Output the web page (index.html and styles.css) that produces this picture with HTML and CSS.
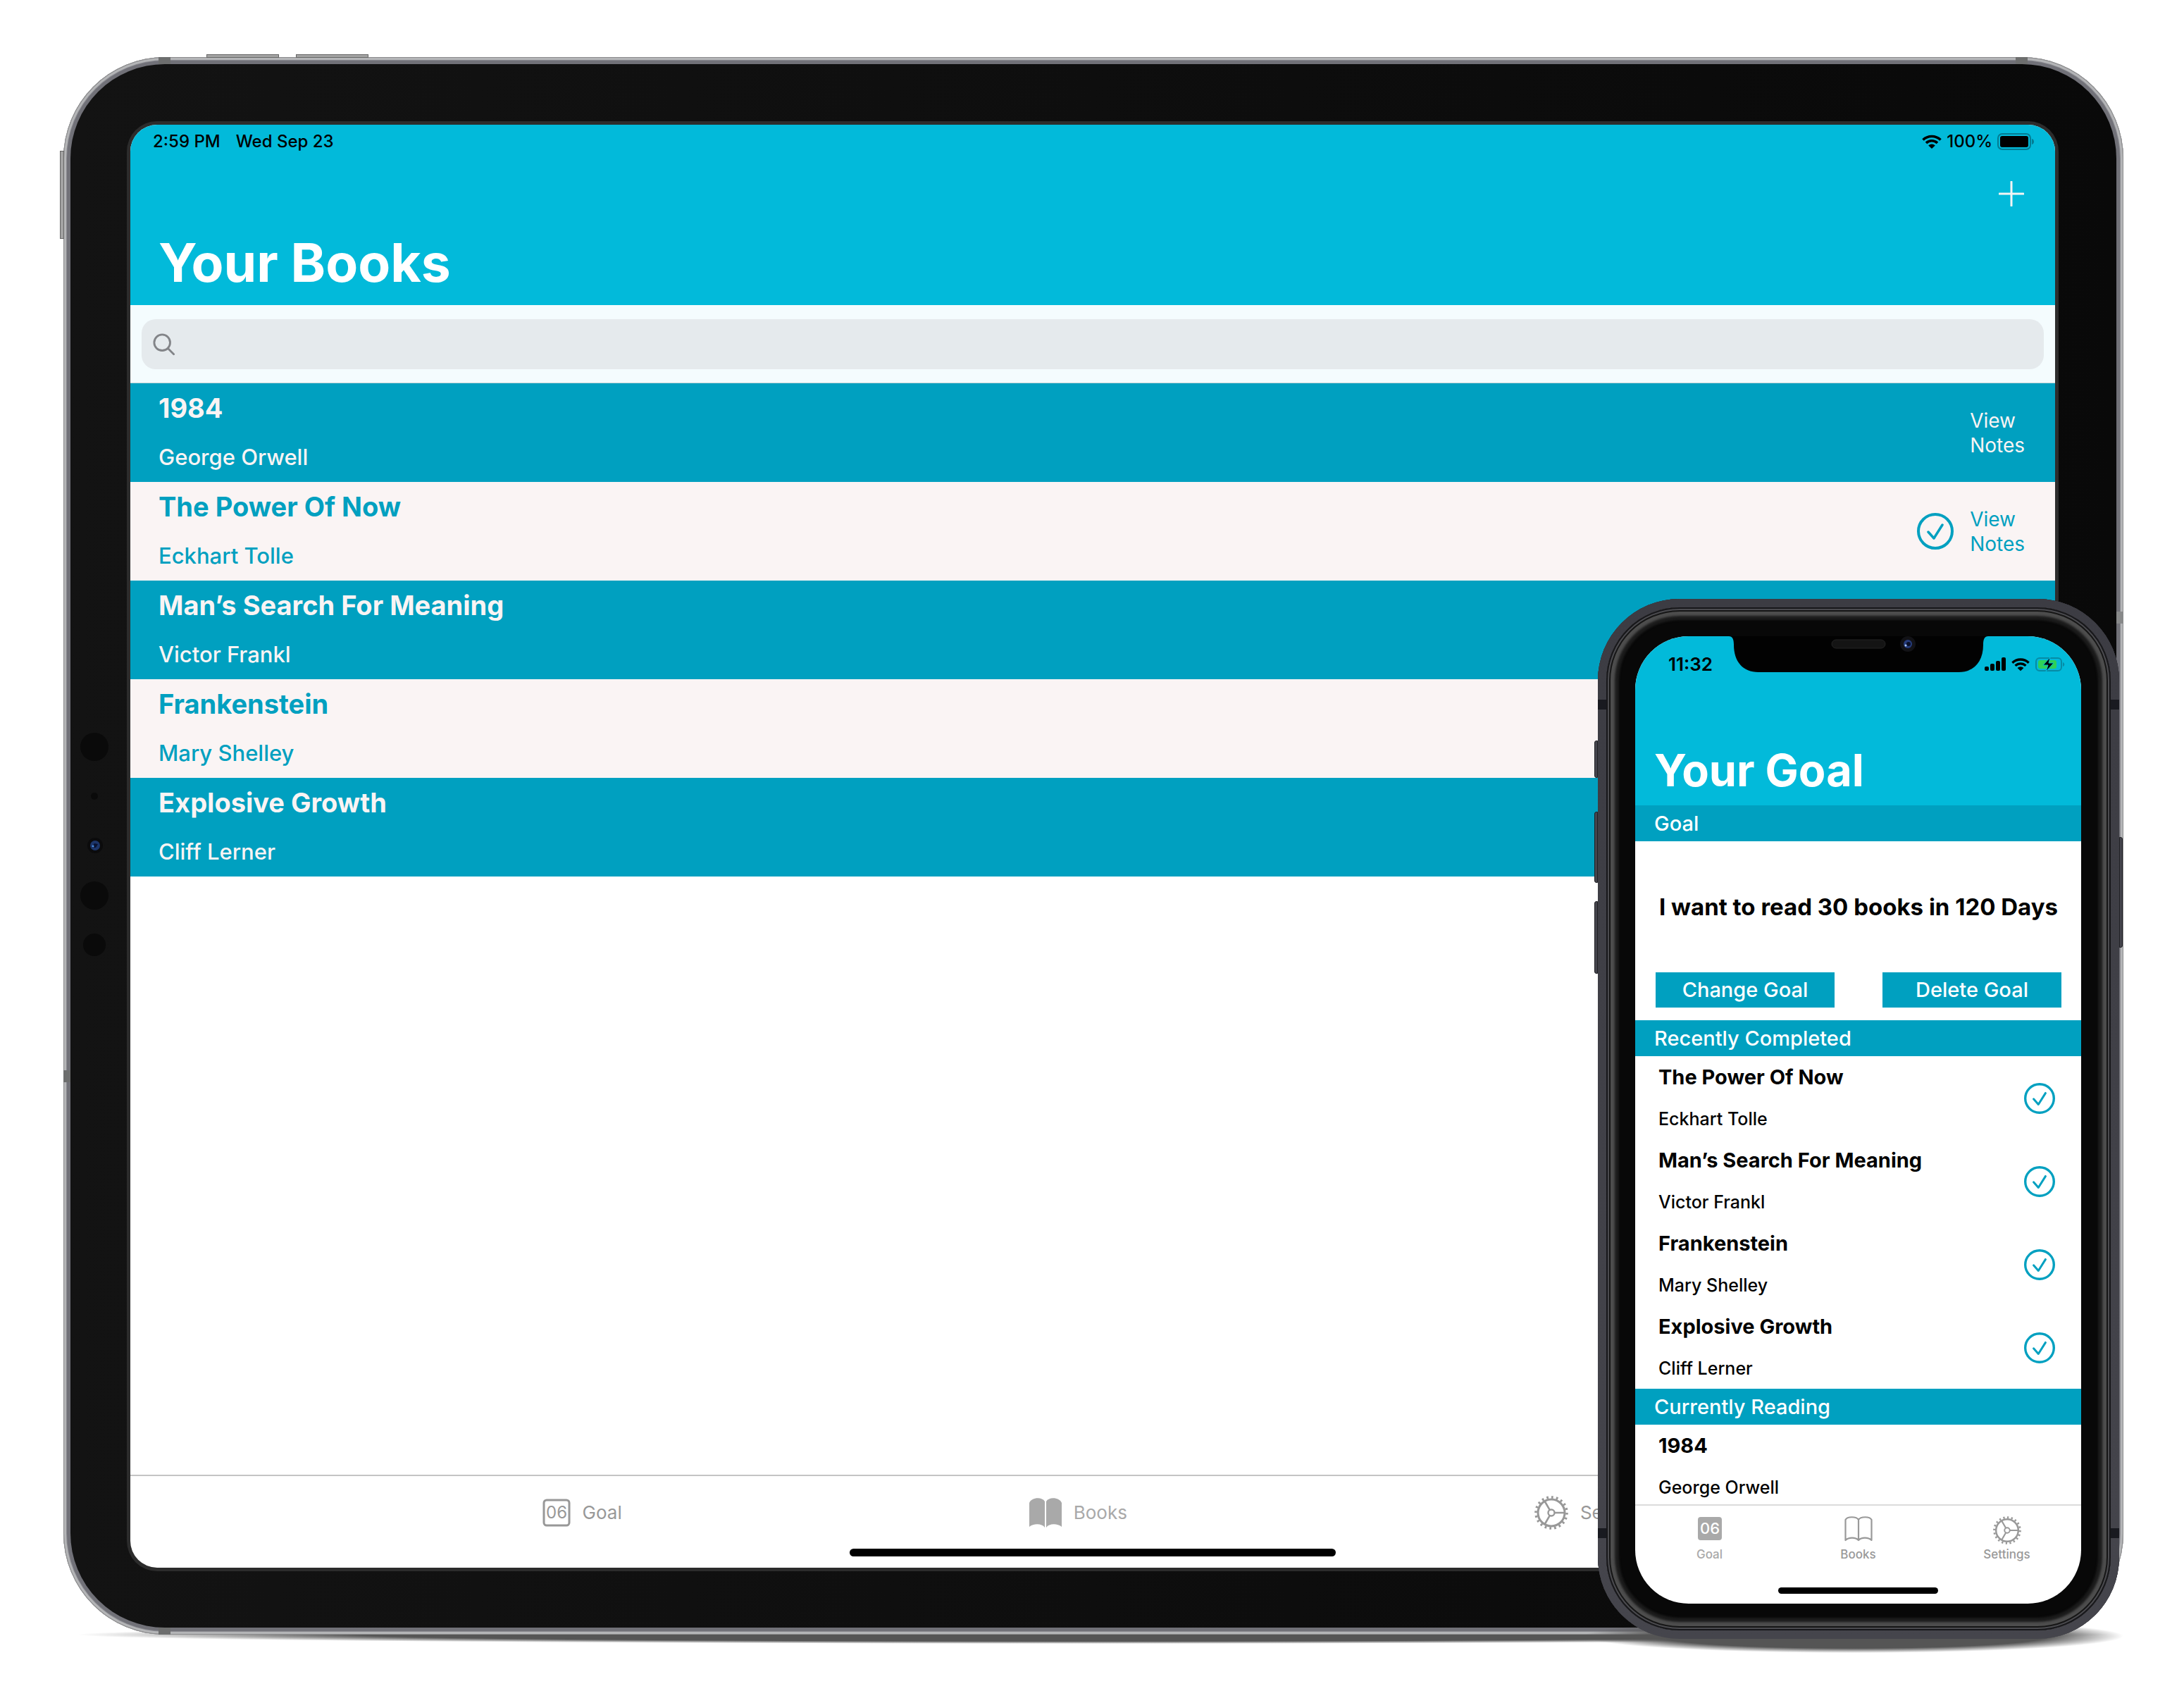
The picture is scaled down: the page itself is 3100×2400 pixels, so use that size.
FILE: index.html
```html
<!DOCTYPE html>
<html lang="en">
<head>
<meta charset="utf-8">
<meta name="viewport" content="width=device-width, initial-scale=1">
<title>Your Books</title>
<link rel="stylesheet" href="styles.css">
</head>
<body>
<svg class="sprite" aria-hidden="true">
  <symbol id="check" viewBox="0 0 52 52">
    <circle cx="26" cy="26" r="24" fill="none" stroke="currentColor" stroke-width="4"/>
    <path d="M16 27l8 9L36 17" fill="none" stroke="currentColor" stroke-width="3.500" stroke-linecap="round" stroke-linejoin="round"/>
  </symbol>
  <symbol id="wifi" viewBox="0 0 28 20">
    <path d="M1.500 7.500a18 18 0 0 1 25 0M6 12a11.500 11.500 0 0 1 16 0" fill="none" stroke="currentColor" stroke-width="3.600"/>
    <path d="M14 20l-4.800-4.600a7 7 0 0 1 9.600 0z" fill="currentColor"/>
  </symbol>
  <symbol id="gear" viewBox="0 0 48 48">
    <g fill="none" stroke="currentColor">
      <circle cx="24" cy="24" r="19" stroke-width="3"/>
      <circle cx="24" cy="24" r="22" stroke-width="3.600" pathLength="60" stroke-dasharray="1.200 1.800"/>
      <circle cx="24" cy="24" r="4.500" stroke-width="2.400"/>
      <path d="M28.500 24H43M21.800 20.100L14.500 7.500M21.800 27.900L14.500 40.500" stroke-width="2.600"/>
    </g>
  </symbol>
  <symbol id="book-solid" viewBox="0 0 46 42">
    <path d="M0 7C3-1 18-2 22 5V42C18 36 6 36 0 41zM46 7C43-1 28-2 24 5V42C28 36 40 36 46 41z" fill="currentColor"/>
  </symbol>
  <symbol id="book-line" viewBox="0 0 40 36">
    <path d="M1.500 5C4 0 17 0 20 5C23 0 36 0 38.500 5V34C34 29.500 24 29.500 20 34C16 29.500 6 29.500 1.500 34zM20 5V34" fill="none" stroke="currentColor" stroke-width="2.200" stroke-linejoin="round"/>
  </symbol>
</svg>

<main class="stage">
  <section class="tablet" aria-label="Your Books">
    <i class="tablet-key key-up"></i><i class="tablet-key key-down"></i><i class="tablet-key key-side"></i>
    <i class="band band-tl"></i><i class="band band-tr"></i><i class="band band-bl"></i><i class="band band-l"></i><i class="band band-r"></i>
    <div class="tablet-bezel">
      <svg class="sensors" viewBox="0 0 44 304" aria-hidden="true">
        <g fill="#0a0a0a"><circle cx="22" cy="21" r="20"/><circle cx="22" cy="91" r="5"/><circle cx="22" cy="232" r="20"/><circle cx="22" cy="302" r="16"/></g>
        <circle cx="23" cy="161" r="11" fill="#0b0b0c"/><circle cx="23" cy="161" r="7" fill="#1c3569"/><path d="M18 164l4-6 5 1-3 5z" fill="#0a1230"/><circle cx="20" cy="162" r="1.500" fill="#4a90e8"/>
      </svg>
      <div class="tablet-screen">
        <header class="tablet-header">
          <div class="tablet-status">
            <span>2:59 PM</span><span>Wed Sep 23</span>
            <span class="status-right">
              <svg width="28" height="20"><use href="#wifi"/></svg>
              <span>100%</span>
              <svg width="52" height="24" viewBox="0 0 52 24" aria-hidden="true"><rect x="1" y="1" width="46" height="22" rx="6" fill="none" stroke="#037c93" stroke-width="2"/><rect x="4" y="4" width="40" height="16" rx="3"/><path d="M49 8c4 1 4 7 0 8z" fill="#037c93"/></svg>
            </span>
          </div>
          <button class="add" aria-label="Add book"><svg width="36" height="36" viewBox="0 0 36 36"><path d="M18 1v34M1 18h34" stroke="#f4f4f4" stroke-width="3" stroke-linecap="round"/></svg></button>
          <h1 class="tablet-title">Your Books</h1>
        </header>
        <div class="search">
          <label class="search-field">
            <svg width="32" height="32" viewBox="0 0 34 34" aria-hidden="true"><circle cx="14" cy="14" r="12" fill="none" stroke="#828488" stroke-width="3"/><path d="M22.500 22.500l9 9" stroke="#828488" stroke-width="3" stroke-linecap="round"/></svg>
            <input type="search" aria-label="Search books">
          </label>
        </div>
        <ul class="books">
          <li class="book"><div class="book-text"><h2>1984</h2><p>George Orwell</p></div><button class="notes">View<br>Notes</button></li>
          <li class="book"><div class="book-text"><h2>The Power Of Now</h2><p>Eckhart Tolle</p></div><svg class="book-check" aria-hidden="true"><use href="#check"/></svg><button class="notes">View<br>Notes</button></li>
          <li class="book"><div class="book-text"><h2>Man’s Search For Meaning</h2><p>Victor Frankl</p></div></li>
          <li class="book"><div class="book-text"><h2>Frankenstein</h2><p>Mary Shelley</p></div></li>
          <li class="book"><div class="book-text"><h2>Explosive Growth</h2><p>Cliff Lerner</p></div></li>
        </ul>
        <div class="tablet-bottom">
          <nav class="tablet-tabs">
            <a href="#goal"><svg width="40" height="40" viewBox="0 0 40 40" aria-hidden="true"><rect x="2" y="2" width="36" height="36" rx="4" fill="none" stroke="currentColor" stroke-width="3"/><text x="20" y="28" class="tile-text">06</text></svg><span>Goal</span></a>
            <a href="#books" class="active"><svg width="46" height="42"><use href="#book-solid"/></svg><span>Books</span></a>
            <a href="#settings"><svg width="48" height="48"><use href="#gear"/></svg><span>Settings</span></a>
          </nav>
          <div class="home-bar"></div>
        </div>
      </div>
    </div>
  </section>

  <section class="phone" aria-label="Your Goal">
    <i class="phone-key mute"></i><i class="phone-key vol-up"></i><i class="phone-key vol-down"></i><i class="phone-key power"></i>
    <i class="seam seam-tl"></i><i class="seam seam-tr"></i><i class="seam seam-bl"></i><i class="seam seam-br"></i>
    <div class="phone-bezel">
      <div class="phone-screen">
        <svg class="notch" width="368" height="52" viewBox="0 0 368 52" aria-hidden="true">
          <path d="M0 0C5 0 7 4 7 12C7 36 20 51 42 51H326C348 51 361 36 361 12C361 4 363 0 368 0z" fill="#020202"/>
          <rect x="146" y="5" width="76" height="12" rx="6" fill="#141414" stroke="#242424"/>
          <circle cx="254" cy="11" r="11" fill="#121216"/><circle cx="254" cy="11" r="6" fill="#263c7c"/><circle cx="255" cy="11" r="3" fill="#0a1028"/><circle cx="251" cy="13" r="1.500" fill="#a9c8ff"/>
        </svg>
        <header class="phone-header">
          <div class="phone-status">
            <span>11:32</span>
            <span class="phone-status-icons">
              <svg width="30" height="20" viewBox="0 0 30 20" aria-hidden="true"><rect x="0" y="13" width="6" height="6" rx="2"/><rect x="8" y="9" width="6" height="10" rx="2"/><rect x="16" y="5" width="6" height="14" rx="2"/><rect x="24" y="0" width="6" height="19" rx="2"/></svg>
              <svg width="26" height="20"><use href="#wifi"/></svg>
              <svg width="42" height="20" viewBox="0 0 42 20" aria-hidden="true"><rect x="1" y="1" width="36" height="18" rx="5" fill="none" stroke="#078ba5" stroke-width="2"/><rect x="4" y="4" width="26" height="12" rx="3" fill="#2fd158"/><path d="M39 7c3 1 3 5 0 6z" fill="#078ba5"/><path d="M21 0l-10 11h7l-3 9 11-12h-7z" stroke="#02bada" stroke-width="1"/></svg>
            </span>
          </div>
          <h1 class="phone-title">Your Goal</h1>
        </header>
        <h2 class="section-head">Goal</h2>
        <div class="goal">
          <p class="goal-text">I want to read 30 books in 120 Days</p>
          <div class="goal-actions"><button>Change Goal</button><button>Delete Goal</button></div>
        </div>
        <h2 class="section-head">Recently Completed</h2>
        <ul class="entries">
          <li><div class="entry-text"><h3>The Power Of Now</h3><p>Eckhart Tolle</p></div><svg class="entry-check" aria-hidden="true"><use href="#check"/></svg></li>
          <li><div class="entry-text"><h3>Man’s Search For Meaning</h3><p>Victor Frankl</p></div><svg class="entry-check" aria-hidden="true"><use href="#check"/></svg></li>
          <li><div class="entry-text"><h3>Frankenstein</h3><p>Mary Shelley</p></div><svg class="entry-check" aria-hidden="true"><use href="#check"/></svg></li>
          <li><div class="entry-text"><h3>Explosive Growth</h3><p>Cliff Lerner</p></div><svg class="entry-check" aria-hidden="true"><use href="#check"/></svg></li>
        </ul>
        <h2 class="section-head">Currently Reading</h2>
        <ul class="entries reading">
          <li><div class="entry-text"><h3>1984</h3><p>George Orwell</p></div></li>
        </ul>
        <div class="phone-bottom">
          <nav class="phone-tabs">
            <a href="#goal" class="active"><svg width="34" height="40" viewBox="0 0 34 40" aria-hidden="true"><rect y="1" width="34" height="33" rx="4" fill="currentColor"/><text x="17" y="25" class="tile-text tile-light">06</text></svg><span>Goal</span></a>
            <a href="#books"><svg width="40" height="40"><use href="#book-line" height="36"/></svg><span>Books</span></a>
            <a href="#settings"><svg width="40" height="40"><use href="#gear"/></svg><span>Settings</span></a>
          </nav>
          <div class="home-bar"></div>
        </div>
      </div>
    </div>
  </section>
</main>
</body>
</html>
```

FILE: styles.css
```css
:root {
  --cyan: #02bada;
  --teal: #00a0c0;
  --blush: #faf4f4;
}

* { box-sizing: border-box; }

body {
  margin: 0;
  background: #fff;
  font-family: Inter, "Liberation Sans", sans-serif;
  color: #000;
}

h1, h2, h3, p, ul { margin: 0; padding: 0; }
ul { list-style: none; }
a { text-decoration: none; }
svg { display: block; flex: none; }
button { border: 0; padding: 0; background: none; font: inherit; color: inherit; }
.sprite { position: absolute; width: 0; height: 0; }

.stage {
  position: relative;
  display: flex;
  min-height: 100vh;
  padding: 81px 86px 80px 90px;
}

/* Tablet body */
.tablet {
  position: relative;
  display: flex;
  flex: 1;
  min-width: 0;
  padding: 10px;
  border-radius: 144px;
  background: #717178;
  box-shadow: inset 0 0 0 1px #8b8b8c, inset 0 0 0 4px #b4b5b7, inset 0 0 0 5px #8a8a90;
}

.tablet::before, .phone::before {
  content: "";
  position: absolute;
  z-index: -1;
  background: radial-gradient(closest-side, #555 0 72%, transparent 100%);
}
.tablet::before { left: 20px; right: 20px; bottom: -13px; height: 26px; }

.tablet-bezel {
  position: relative;
  display: flex;
  flex: 1;
  min-width: 0;
  padding: 76px 77px 75px 75px;
  border-radius: 134px;
  background: linear-gradient(90deg, #131313, #090909);
}

.tablet-key { position: absolute; background: #a3a3a3; border: 1px solid #666; }
.key-up, .key-down { top: -4px; width: 103px; height: 5px; }
.key-up { left: 203px; }
.key-down { left: 330px; }
.key-side { left: -5px; top: 133px; width: 6px; height: 125px; }

.band { position: absolute; background: #6d6e6e; }
.band-tl, .band-tr, .band-bl { width: 17px; height: 10px; }
.band-tl { left: 135px; top: 0; }
.band-tr { right: 136px; top: 0; }
.band-bl { left: 135px; bottom: 0; }
.band-l, .band-r { width: 10px; height: 17px; }
.band-l { left: 0; top: 1438px; }
.band-r { right: 0; top: 787px; background: #88898a; }

.sensors { position: absolute; left: 12px; top: 948px; width: 44px; height: 304px; overflow: visible; }

.tablet-screen {
  display: flex;
  flex: 1;
  min-width: 0;
  flex-direction: column;
  overflow: hidden;
  margin: 10px;
  border-radius: 38px;
  background: #fff;
  box-shadow: 0 0 0 5px #2c2c2c;
}

.tablet-header {
  display: flex;
  flex-direction: column;
  padding: 9px 44px 16px 40px;
  background: var(--cyan);
  color: #fff;
}
.tablet-status {
  display: flex;
  gap: 22px;
  margin: 0 -14px 0 -8px;
  font-size: 24px;
  line-height: 30px;
  font-weight: 500;
  color: #000;
}
.status-right { display: flex; align-items: center; gap: 7px; margin-left: auto; }
.add { align-self: flex-end; margin-top: 41px; }
.tablet-title { margin-top: 36px; font-size: 75px; line-height: 88px; font-weight: 700; }

.search { padding: 20px 16px 19px; background: #f4fcfe; border-bottom: 1px solid #c5d4d7; }
.search-field {
  display: flex;
  align-items: center;
  gap: 12px;
  height: 71px;
  padding: 0 16px;
  border-radius: 20px;
  background: #e5eaed;
}
.search-field input { flex: 1; min-width: 0; border: 0; outline: 0; background: none; font: inherit; font-size: 30px; }

.books { flex: 1; }
.book {
  display: flex;
  align-items: center;
  padding: 12px 43px 17px 40px;
  background: var(--teal);
  color: var(--blush);
}
.book:nth-child(even) { background: var(--blush); color: var(--teal); }
.book-text { display: flex; flex: 1; flex-direction: column; gap: 29px; }
.book h2 { font-size: 38px; line-height: 46px; font-weight: 700; }
.book p { font-size: 31px; line-height: 36px; font-weight: 500; }
.book-check { width: 52px; height: 52px; margin: 5px 23px 0 0; }
.notes { padding-top: 6px; font-size: 28px; line-height: 35px; text-align: left; }

.tablet-bottom { padding: 28px 0 16px; border-top: 2px solid #c4c4c4; }
.tablet-tabs { display: flex; justify-content: center; gap: 578px; height: 48px; padding-left: 10px; }
.tablet-tabs a { display: flex; align-items: center; gap: 17px; color: #989898; font-size: 26px; line-height: 32px; }
.tablet-tabs .active, .phone-tabs .active { color: #a9a9a9; }
.tile-text { font-size: 24px; text-anchor: middle; fill: currentColor; }
.tile-light { font-size: 22px; fill: #fff; }

.home-bar { width: 36%; height: 9px; margin: 36px auto 0; border-radius: 6px; background: #000; }
.tablet-bottom .home-bar { width: 690px; max-width: 50%; height: 11px; margin-top: 27px; }

/* Phone body, resting over the tablet's corner */
.phone {
  position: absolute;
  right: 92px;
  bottom: 74px;
  isolation: isolate;
  width: 740px;
  max-width: 90%;
  padding: 12px;
  border-radius: 116px;
  background: #45454c;
  box-shadow: inset 0 0 2px 2px #26262b, inset 0 0 4px 7px #4f4f57;
}
.phone::before { left: -20px; right: -6px; bottom: -20px; height: 48px; }
.phone::after { content: ""; position: absolute; z-index: -1; inset: 0; border-radius: 116px; background: linear-gradient(#3c3c43, #45454c); }

.phone-bezel {
  padding: 41px 42px 38px 41px;
  border-radius: 104px;
  background: #080808;
  box-shadow: inset 0 0 0 2px #17171a, inset 0 0 0 4px #4b4b4f, inset 0 0 0 6px #161616, inset 0 0 3px 12px #4d4d4d, inset 0 0 3px 18px #1c1c1c;
}

.phone-key { position: absolute; width: 5px; background: #45454d; border: 1px solid #202024; border-radius: 3px 0 0 3px; left: -5px; }
.mute { top: 201px; height: 53px; }
.vol-up { top: 302px; height: 101px; }
.vol-down { top: 429px; height: 103px; }
.power { left: auto; right: -5px; top: 338px; height: 157px; border-radius: 0 3px 3px 0; }

.seam { position: absolute; width: 12px; height: 14px; background: #191a20; }
.seam-tl { left: 0; top: 143px; }
.seam-tr { right: 0; top: 143px; }
.seam-bl { left: 0; bottom: 143px; }
.seam-br { right: 0; bottom: 143px; }

.phone-screen { position: relative; overflow: hidden; border-radius: 76px; background: #fff; }
.notch { position: absolute; top: 0; left: calc(50% - 184px); }

.phone-header { padding: 24px 23px 12px 27px; background: var(--cyan); color: #fff; }
.phone-status {
  display: flex;
  align-items: center;
  justify-content: space-between;
  padding-left: 20px;
  font-size: 26px;
  line-height: 32px;
  font-weight: 600;
  color: #000;
}
.phone-status-icons { display: flex; gap: 8px; }
.phone-title { margin-top: 96px; font-size: 63px; line-height: 76px; font-weight: 700; }

.section-head { padding: 0 27px; background: var(--teal); color: #fff; font-size: 29px; line-height: 51px; font-weight: 500; }

.goal { padding: 73px 28px 18px 29px; }
.goal-text { text-align: center; font-size: 33px; line-height: 40px; font-weight: 700; white-space: nowrap; }
.goal-actions { display: flex; gap: 68px; margin-top: 73px; }
.goal-actions button { flex: 1; background: var(--teal); color: #fff; font-size: 29px; line-height: 50px; font-weight: 500; }

.entries li { display: flex; align-items: center; padding: 12px 37px 14px 33px; }
.entries.reading li { padding-bottom: 9px; }
.entry-text { display: flex; flex: 1; flex-direction: column; gap: 26px; }
.entries h3 { font-size: 29px; line-height: 36px; font-weight: 700; }
.entries p { font-size: 25px; line-height: 30px; font-weight: 500; }
.entry-check { width: 44px; height: 44px; margin-top: 3px; color: var(--teal); }

.phone-bottom { padding: 15px 0 14px; border-top: 2px solid #dcdcdc; }
.phone-tabs { display: flex; }
.phone-tabs a { display: flex; flex: 1; flex-direction: column; align-items: center; gap: 3px; color: #999; font-size: 17px; line-height: 22px; font-weight: 500; }
```
